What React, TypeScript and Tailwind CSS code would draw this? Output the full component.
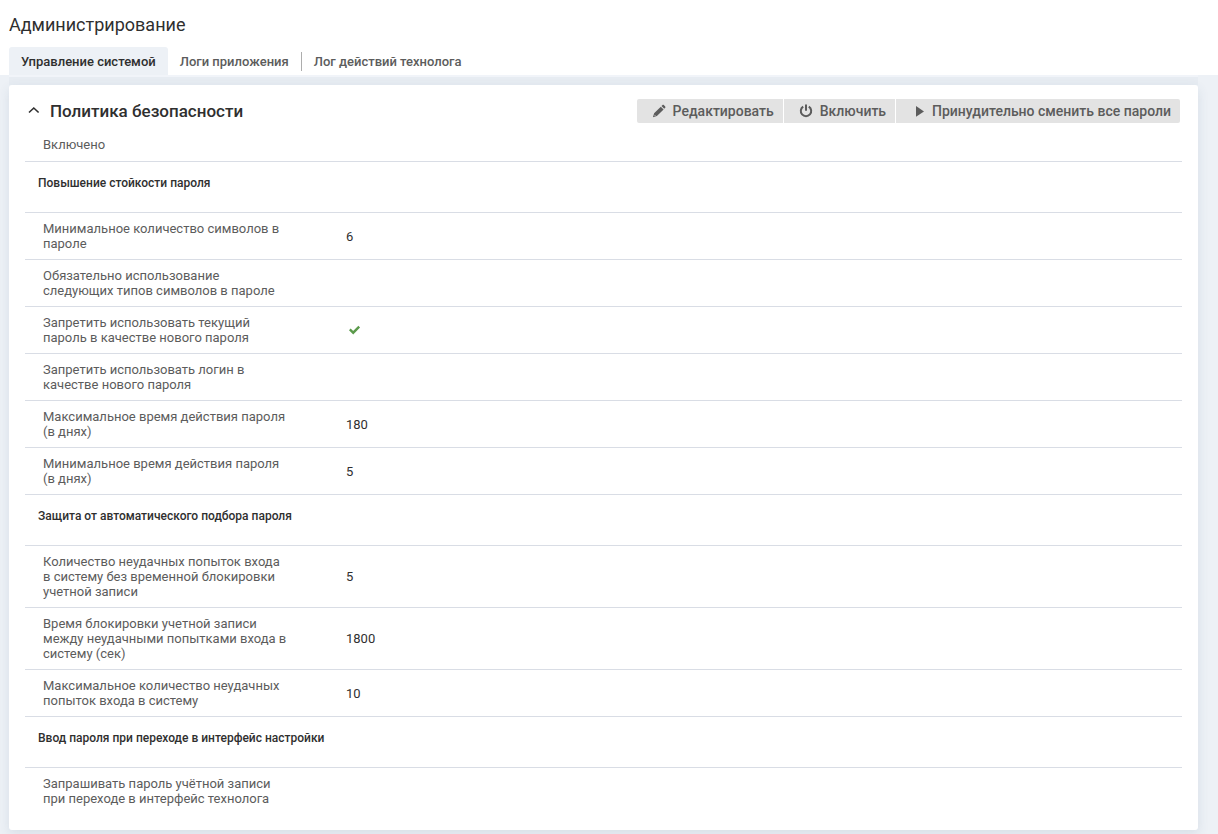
const tabs = ['Управление системой', 'Логи приложения', 'Лог действий технолога'];

type Row = { label: string; value?: string; checked?: boolean };
type Group = { title: string; rows: Row[] };

const groups: Group[] = [
  {
    title: 'Повышение стойкости пароля',
    rows: [
      { label: 'Минимальное количество символов в пароле', value: '6' },
      { label: 'Обязательно использование следующих типов символов в пароле' },
      { label: 'Запретить использовать текущий пароль в качестве нового пароля', checked: true },
      { label: 'Запретить использовать логин в качестве нового пароля' },
      { label: 'Максимальное время действия пароля (в днях)', value: '180' },
      { label: 'Минимальное время действия пароля (в днях)', value: '5' },
    ],
  },
  {
    title: 'Защита от автоматического подбора пароля',
    rows: [
      { label: 'Количество неудачных попыток входа в систему без временной блокировки учетной записи', value: '5' },
      { label: 'Время блокировки учетной записи между неудачными попытками входа в систему (сек)', value: '1800' },
      { label: 'Максимальное количество неудачных попыток входа в систему', value: '10' },
    ],
  },
  {
    title: 'Ввод пароля при переходе в интерфейс настройки',
    rows: [{ label: 'Запрашивать пароль учётной записи при переходе в интерфейс технолога' }],
  },
];

function PencilIcon() {
  return (
    <svg width="14" height="14" viewBox="0 0 14 14" fill="currentColor" aria-hidden="true">
      <path d="M8.8 2.7 11.6 5.5 4.9 12.1 1 13.3.9 13.2 2.1 9.3zM9.5 2l1-1c.4-.4.9-.4 1.3 0l1.4 1.4c.4.4.4.9 0 1.3l-1 1z" />
      <path d="M2.4 10.9 3.4 11.9" stroke="#e3e3e3" strokeWidth=".8" fill="none" />
    </svg>
  );
}

function PowerIcon() {
  return (
    <svg width="14" height="14" viewBox="0 0 14 14" fill="none" stroke="currentColor" strokeWidth="2" aria-hidden="true">
      <path d="M4.2 2.6a5.2 5.2 0 1 0 5.6 0M7 .6v6.2" />
    </svg>
  );
}

function PlayIcon() {
  return (
    <svg width="14" height="14" viewBox="0 0 14 14" fill="currentColor" aria-hidden="true">
      <path d="M5 2v10.8l8-5.4z" />
    </svg>
  );
}

function CheckIcon() {
  return (
    <svg width="12" height="10" viewBox="0 0 12 10" fill="none" stroke="#5b9a4b" strokeWidth="2.4" role="img" aria-label="Да">
      <path d="M.8 4.4 4.2 7.7 10.2 1.6" />
    </svg>
  );
}

const actions = [
  { label: 'Редактировать', icon: <PencilIcon /> },
  { label: 'Включить', icon: <PowerIcon /> },
  { label: 'Принудительно сменить все пароли', icon: <PlayIcon /> },
];

export default function App() {
  return (
    <div className="min-h-screen bg-[#edf1f6] font-['Roboto','Liberation_Sans',sans-serif] text-[13px] leading-[15px] text-[#2f2f2f]">
      <header className="bg-white pl-[9px] pt-[13px]">
        <h1 className="text-[18px] leading-6">Администрирование</h1>
        <nav className="mt-[10px] flex h-7 items-stretch" role="tablist">
          {tabs.map((tab, i) => (
            <button
              key={tab}
              role="tab"
              aria-selected={i === 0}
              className={
                i === 0
                  ? 'rounded-t-[3px] bg-[#edf1f6] px-3 font-medium text-[#2f2f2f]'
                  : 'flex items-center font-medium text-[#5c5c5c]'
              }
            >
              {i === 0 ? (
                tab
              ) : (
                <span className={i === 1 ? 'border-r border-[#adadad] px-3 py-[2px]' : 'px-3'}>{tab}</span>
              )}
            </button>
          ))}
        </nav>
      </header>

      <main className="overflow-hidden pb-3 pl-[9px] pr-5">
        <div className="h-[2px] bg-[#f1f4f9]" />
        <div className="h-2 bg-[#e7ecf2]" />
        <section className="rounded-[3px] bg-white px-4 pb-4 shadow-[0_4px_12px_rgba(60,90,120,0.12)]">
          <div className="flex items-center justify-between pr-[2px] pt-[14px]">
            <h2>
              <button className="flex items-center gap-[10px] text-[17px] font-medium leading-6" aria-expanded="true">
                <svg className="ml-[3px]" width="12" height="12" viewBox="0 0 12 12" fill="none" stroke="currentColor" strokeWidth="1.6" aria-hidden="true">
                  <path d="M1 7.5 5.8 3l4.8 4.5" />
                </svg>
                Политика безопасности
              </button>
            </h2>
            <div className="flex gap-px overflow-hidden rounded-[2px]">
              {actions.map(({ label, icon }) => (
                <button
                  key={label}
                  className="flex h-6 items-center gap-[7px] bg-[#e3e3e3] pl-[15px] pr-[9px] text-[14px] font-medium leading-4 text-[#5c5c5c]"
                >
                  {icon}
                  {label}
                </button>
              ))}
            </div>
          </div>

          <p className="pb-[9px] pl-[18px] pt-[14px] text-[#5c5c5c]">Включено</p>

          {groups.map((group) => (
            <table key={group.title} className="w-full table-fixed border-collapse">
              <caption className="h-[51px] border-t border-[#d9dde5] pl-[13px] pt-[14px] text-left text-[12px] font-medium">
                {group.title}
              </caption>
              <colgroup>
                <col className="w-[321px]" />
                <col />
              </colgroup>
              <tbody>
                {group.rows.map((row) => (
                  <tr key={row.label} className="border-t border-[#d9dde5]">
                    <th scope="row" className="py-2 pl-[18px] pr-14 text-left font-normal text-[#5c5c5c]">
                      {row.label}
                    </th>
                    <td className="align-middle">{row.checked ? <span className="block pl-[3px]"><CheckIcon /></span> : row.value}</td>
                  </tr>
                ))}
              </tbody>
            </table>
          ))}
        </section>
      </main>
    </div>
  );
}
